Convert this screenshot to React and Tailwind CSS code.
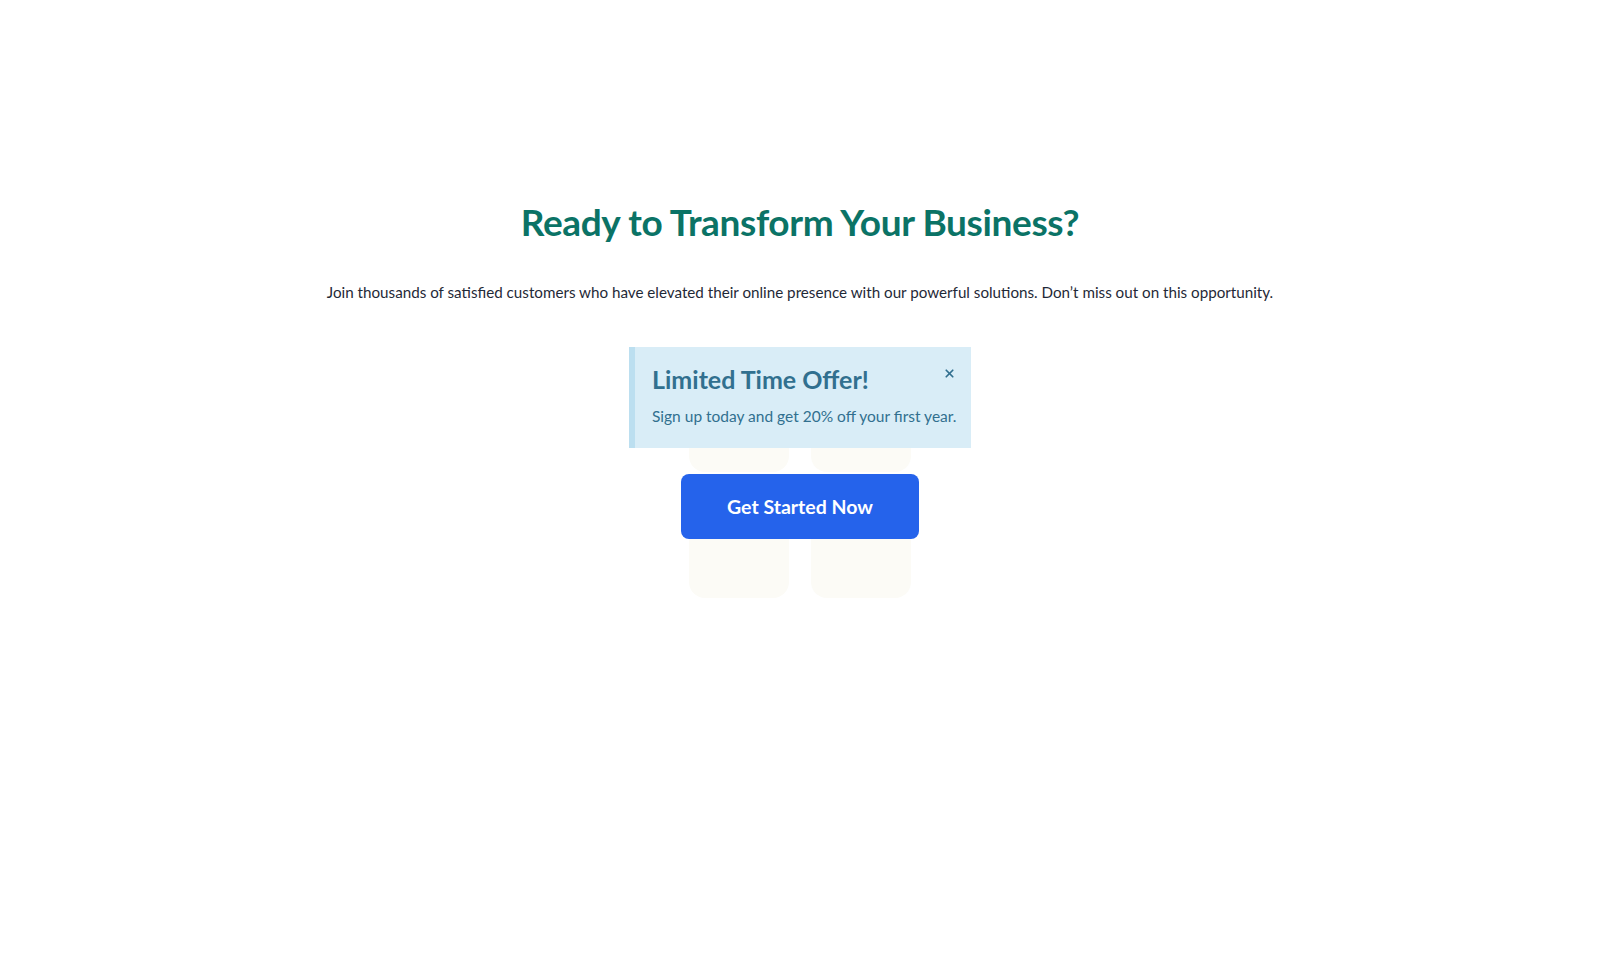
import React, { useState } from "react";
import { X } from "lucide-react";

const App = () => {
  const [showOffer, setShowOffer] = useState(true);

  return (
    <div className="min-h-screen bg-white font-['Lato',sans-serif]">
      <section className="flex flex-col items-center pt-[198px]">
        <h1 className="text-[37px] leading-[48px] font-bold text-[#0b7366] tracking-[-0.01em]">
          Ready to Transform Your Business?
        </h1>
        <p className="mt-[34px] text-[15.2px] leading-6 text-[#1f2937]">
          Join thousands of satisfied customers who have elevated their online presence with our powerful solutions. Don’t miss out on this opportunity.
        </p>

        <div className="relative mt-[43px] flex flex-col items-center">
          {/* pale decorative blocks behind the offer */}
          <div className="absolute left-[60px] top-[40px] flex gap-[22px]">
            <div className="h-[85px] w-[100px] rounded-2xl bg-[#fcfbf6]"></div>
            <div className="h-[85px] w-[100px] rounded-2xl bg-[#fcfbf6]"></div>
          </div>
          <div className="absolute left-[60px] top-[170px] flex gap-[22px]">
            <div className="h-[81px] w-[100px] rounded-2xl bg-[#fcfbf6]"></div>
            <div className="h-[81px] w-[100px] rounded-2xl bg-[#fcfbf6]"></div>
          </div>

          {showOffer && (
            <div className="relative w-[342px] h-[101px] border-l-[6px] border-[#bcdff0] bg-[#d9edf7] pl-[17px] pt-[16px] text-[#31708f]">
              <button
                onClick={() => setShowOffer(false)}
                className="absolute right-[15px] top-[20px] text-[#31708f]"
              >
                <X size={13} strokeWidth={3.2} />
              </button>
              <h3 className="text-[25px] leading-8 font-bold">Limited Time Offer!</h3>
              <p className="mt-[9px] text-[15.5px] leading-6">Sign up today and get 20% off your first year.</p>
            </div>
          )}

          <button className="relative mt-[26px] h-[65px] w-[238px] rounded-lg bg-[#2563eb] text-[19.5px] font-bold text-white">
            Get Started Now
          </button>
        </div>
      </section>
    </div>
  );
};

export default App;
